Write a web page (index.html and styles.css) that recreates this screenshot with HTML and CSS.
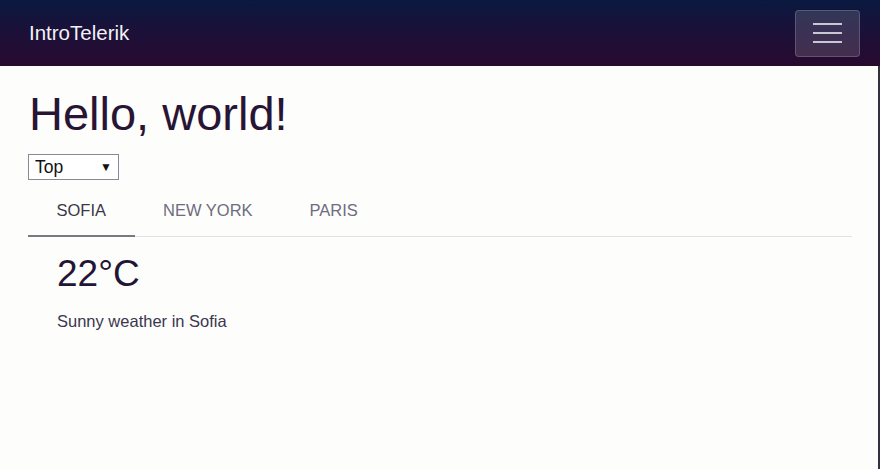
FILE: index.html
```html
<!DOCTYPE html>
<html lang="en">
<head>
<meta charset="utf-8">
<title>IntroTelerik</title>
<link rel="stylesheet" href="styles.css">
</head>
<body>
<header class="navbar">
  <span class="brand">IntroTelerik</span>
  <button class="toggler" aria-label="Toggle navigation">
    <span class="bar"></span><span class="bar"></span><span class="bar"></span>
  </button>
</header>
<main class="page">
  <h1 class="title">Hello, world!</h1>
  <div class="select-wrap">
    <select class="pos-select">
      <option>Top</option>
      <option>Bottom</option>
      <option>Left</option>
      <option>Right</option>
    </select>
  </div>
  <div class="tabstrip">
    <ul class="tabs">
      <li class="tab active">Sofia</li>
      <li class="tab">New York</li>
      <li class="tab">Paris</li>
    </ul>
    <div class="panel">
      <div class="temp">22°C</div>
      <p class="desc">Sunny weather in Sofia</p>
    </div>
  </div>
</main>
</body>
</html>
```
FILE: styles.css
```css
* { box-sizing: border-box; }
html, body { margin: 0; padding: 0; }
body {
  font-family: "Liberation Sans", Arial, sans-serif;
  background: #fdfdfb;
  color: #2a1a38;
  height: 469px;
  overflow: hidden;
}
.navbar {
  height: 66px;
  background: linear-gradient(180deg, #0a1940 0%, #1c1038 50%, #290a2f 100%);
  display: flex;
  align-items: center;
  justify-content: space-between;
  padding: 0 20px 0 29px;
}
.brand {
  color: #f2f2f6;
  font-size: 20.5px;
  line-height: 24px;
}
.toggler {
  width: 65px;
  height: 47px;
  border: 1px solid rgba(255,255,255,0.18);
  border-radius: 4px;
  background: rgba(255,255,255,0.14);
  display: flex;
  flex-direction: column;
  align-items: center;
  justify-content: center;
  gap: 7px;
  padding: 0;
}
.toggler .bar {
  display: block;
  width: 29px;
  height: 2px;
  background: #c9c8d2;
}
.page {
  height: 403px;
  padding: 20px 26px 0 28px;
  border-right: 2px solid #34313f;
}
.title {
  margin: 0 0 12px 1px;
  font-size: 47px;
  font-weight: 400;
  line-height: 1.2;
  color: #281535;
}
.select-wrap {
  position: relative;
  display: inline-block;
  margin-bottom: 4px;
}
.pos-select {
  appearance: none;
  -webkit-appearance: none;
  width: 91px;
  height: 26px;
  border: 1px solid #8a8896;
  border-radius: 0;
  background: #fff;
  font-family: "Liberation Sans", Arial, sans-serif;
  font-size: 17.5px;
  color: #111;
  padding: 0 0 0 6px;
  display: block;
}
.select-wrap::after {
  content: "\25BC";
  position: absolute;
  right: 7px;
  top: 6px;
  font-size: 12px;
  color: #111;
  pointer-events: none;
}
.tabs {
  list-style: none;
  margin: 0;
  padding: 0;
  display: flex;
  border-bottom: 1px solid #e2e1e6;
}
.tab {
  padding: 17px 28.5px 15px;
  font-size: 16.5px;
  line-height: 19px;
  text-transform: uppercase;
  color: #6e6c80;
  border-bottom: 2px solid transparent;
  margin-bottom: -1px;
}
.tab.active {
  color: #3a3848;
  border-bottom-color: #7b7787;
}
.panel {
  padding: 15px 29px;
}
.temp {
  font-size: 37px;
  line-height: 1.2;
  color: #231535;
}
.desc {
  margin: 12px 0 0;
  font-size: 16.5px;
  line-height: 24px;
  color: #3a3650;
}
```
